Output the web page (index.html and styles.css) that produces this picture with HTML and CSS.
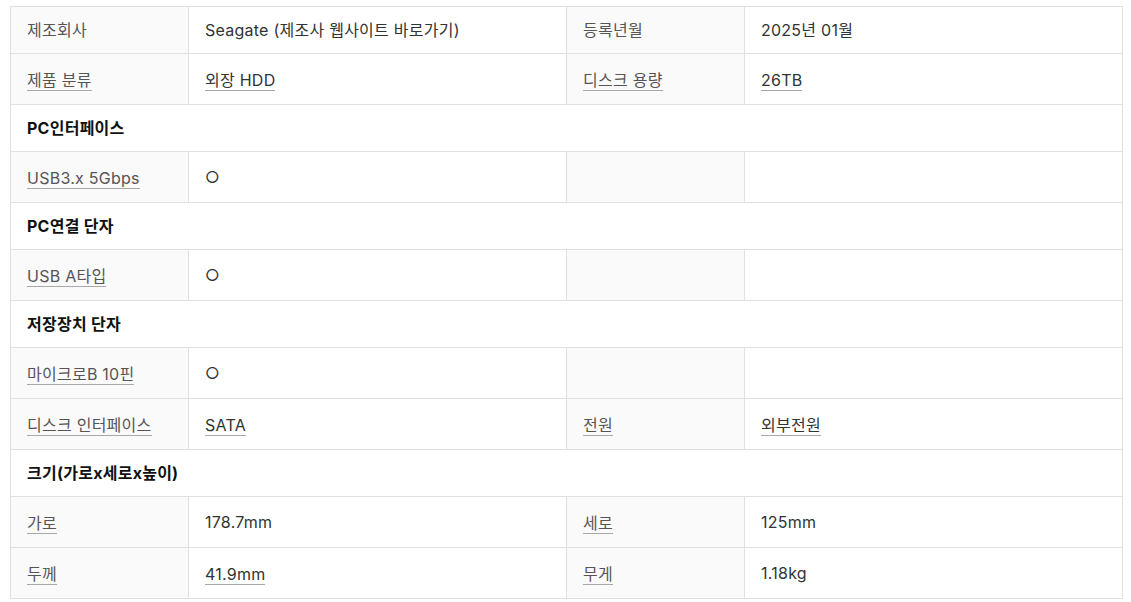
FILE: index.html
```html
<!DOCTYPE html>
<html lang="ko">
<head>
<meta charset="utf-8">
<link rel="stylesheet" href="styles.css">
</head>
<body>
<table class="spec">
  <colgroup>
    <col class="c-label"><col class="c-value"><col class="c-label"><col class="c-value">
  </colgroup>
  <tbody>
    <tr>
      <th>제조회사</th><td>Seagate (제조사 웹사이트 바로가기)</td>
      <th>등록년월</th><td>2025년 01월</td>
    </tr>
    <tr>
      <th><span class="u">제품 분류</span></th><td><span class="u">외장 HDD</span></td>
      <th><span class="u">디스크 용량</span></th><td><span class="u">26TB</span></td>
    </tr>
    <tr class="group"><td colspan="4">PC인터페이스</td></tr>
    <tr>
      <th><span class="u">USB3.x 5Gbps</span></th><td>○</td>
      <th></th><td></td>
    </tr>
    <tr class="group"><td colspan="4">PC연결 단자</td></tr>
    <tr>
      <th><span class="u">USB A타입</span></th><td>○</td>
      <th></th><td></td>
    </tr>
    <tr class="group"><td colspan="4">저장장치 단자</td></tr>
    <tr>
      <th><span class="u">마이크로B 10핀</span></th><td>○</td>
      <th></th><td></td>
    </tr>
    <tr>
      <th><span class="u">디스크 인터페이스</span></th><td><span class="u">SATA</span></td>
      <th><span class="u">전원</span></th><td><span class="u">외부전원</span></td>
    </tr>
    <tr class="group"><td colspan="4">크기(가로x세로x높이)</td></tr>
    <tr>
      <th><span class="u">가로</span></th><td>178.7mm</td>
      <th><span class="u">세로</span></th><td>125mm</td>
    </tr>
    <tr>
      <th><span class="u">두께</span></th><td><span class="u">41.9mm</span></td>
      <th><span class="u">무게</span></th><td>1.18kg</td>
    </tr>
  </tbody>
</table>
</body>
</html>
```

FILE: styles.css
```css
html, body {
  margin: 0;
  padding: 0;
  background: #fff;
}
body {
  padding: 6px 8px 0 10px;
  font-family: Inter, "Noto Sans CJK KR", sans-serif;
  font-size: 16px;
  letter-spacing: 0.25px;
  color: #333;
}
.spec {
  width: 1113px;
  border-collapse: collapse;
  table-layout: fixed;
  border: 1px solid #e0e0e0;
}
.c-label { width: 178px; }
.c-value { width: 378px; }
.spec th, .spec td {
  border: 1px solid #e0e0e0;
  padding: 12px 16px;
  line-height: 22px;
  text-align: left;
  vertical-align: middle;
  font-weight: 400;
}
.spec th {
  background: #fafafa;
  color: #555;
}
.spec td {
  background: #fff;
  color: #333;
}
.spec .group td {
  font-weight: 700;
  color: #111;
}
.u {
  display: inline-block;
  vertical-align: top;
  line-height: 20px;
  padding-top: 4px;
  margin-bottom: 1px;
  border-bottom: 1px solid #a8a8a8;
}
```
